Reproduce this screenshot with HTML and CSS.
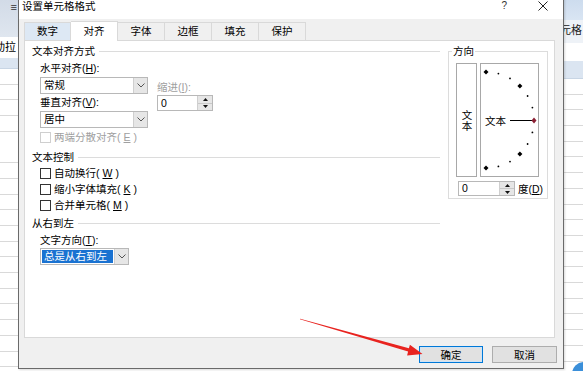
FILE: index.html
```html
<!DOCTYPE html>
<html lang="zh-CN">
<head>
<meta charset="utf-8">
<link rel="stylesheet" href="styles.css">
</head>
<body>
<div class="sheet">
  <div class="strip strip-left">
    <div class="ribbon-l"><span class="menu">≡</span></div>
    <div class="namebar-l"><span>动拉</span></div>
    <div class="hdr-l"></div>
    <div class="grid"></div>
  </div>
  <div class="strip strip-mid"></div>
  <div class="strip strip-right">
    <div class="ribbon-r1"></div>
    <div class="ribbon-r2"><span>单元格</span></div>
    <div class="white-r"></div>
    <div class="hdr-r"></div>
    <div class="grid"></div>
  </div>
</div>

<div class="dialog">
  <div class="titlebar">
    <span class="title">设置单元格格式</span>
    <span class="tb-btns">
      <span class="help">?</span>
      <svg class="close" width="10" height="10" viewBox="0 0 10 10"><path d="M0.5 0.5L9.5 9.5M9.5 0.5L0.5 9.5" stroke="#222" stroke-width="1" fill="none"/></svg>
    </span>
  </div>
  <div class="body">
    <div class="tabs">
      <div class="tab hover">数字</div>
      <div class="tab active">对齐</div>
      <div class="tab">字体</div>
      <div class="tab">边框</div>
      <div class="tab">填充</div>
      <div class="tab">保护</div>
    </div>
    <div class="panel">
      <div class="leftcol">
        <div class="grp-h">文本对齐方式</div>
        <div class="align-row">
          <div class="col-a">
            <div class="lbl">水平对齐(<u>H</u>):</div>
            <div class="select sel-wide"><span class="val">常规</span><span class="dd"><svg width="8" height="5" viewBox="0 0 8 5"><path d="M0.5 0.5L4 4L7.5 0.5" stroke="#555" fill="none"/></svg></span></div>
            <div class="lbl lbl-v">垂直对齐(<u>V</u>):</div>
            <div class="select sel-wide"><span class="val">居中</span><span class="dd"><svg width="8" height="5" viewBox="0 0 8 5"><path d="M0.5 0.5L4 4L7.5 0.5" stroke="#555" fill="none"/></svg></span></div>
          </div>
          <div class="col-b">
            <div class="lbl dis">缩进(<u>I</u>):</div>
            <div class="spin spin-indent">
              <span class="val">0</span>
              <span class="sb">
                <span class="sb-up"><svg width="5" height="3" viewBox="0 0 5 3"><path d="M0 3L2.5 0L5 3Z" fill="#111"/></svg></span>
                <span class="sb-dn"><svg width="5" height="3" viewBox="0 0 5 3"><path d="M0 0L2.5 3L5 0Z" fill="#111"/></svg></span>
              </span>
            </div>
          </div>
        </div>
        <div class="chk dis chk-first"><span class="box"></span>两端分散对齐(<u>E</u>)</div>

        <div class="grp-h grp-2">文本控制</div>
        <div class="chk chk-a"><span class="box"></span>自动换行(<u>W</u>)</div>
        <div class="chk"><span class="box"></span>缩小字体填充(<u>K</u>)</div>
        <div class="chk"><span class="box"></span>合并单元格(<u>M</u>)</div>

        <div class="grp-h grp-3">从右到左</div>
        <div class="lbl lbl-dir">文字方向(<u>T</u>):</div>
        <div class="select sel-dir"><span class="val hl">总是从右到左</span><span class="dd"><svg width="8" height="5" viewBox="0 0 8 5"><path d="M0.5 0.5L4 4L7.5 0.5" stroke="#555" fill="none"/></svg></span></div>
      </div>

      <div class="rightcol">
        <fieldset class="orient">
          <legend>方向</legend>
          <div class="orient-boxes">
            <div class="vbox"><span class="vtext">文本</span></div>
            <div class="dial">
              <svg width="57" height="112" viewBox="0 0 57 112">
                <g fill="#000">
                  <path d="M5 5.5L7.5 8L5 10.5L2.5 8Z"/>
                  <path d="M38.9 19.6L41.4 22.1L38.9 24.6L36.4 22.1Z"/>
                  <path d="M38.9 87.4L41.4 89.9L38.9 92.4L36.4 89.9Z"/>
                  <path d="M5 101.5L7.5 104L5 106.5L2.5 104Z"/>
                  <circle cx="17.4" cy="9.6" r="0.9"/>
                  <circle cx="29" cy="14.4" r="0.9"/>
                  <circle cx="46.6" cy="32" r="0.9"/>
                  <circle cx="51.4" cy="43.6" r="0.9"/>
                  <circle cx="51.4" cy="68.4" r="0.9"/>
                  <circle cx="46.6" cy="80" r="0.9"/>
                  <circle cx="29" cy="97.6" r="0.9"/>
                  <circle cx="17.4" cy="102.4" r="0.9"/>
                </g>
                <line x1="29" y1="56.5" x2="51" y2="56.5" stroke="#000" stroke-width="1"/>
                <path d="M53 53.5L55.5 56.5L53 59.5L50.5 56.5Z" fill="#8a1f33"/>
                <text x="4" y="60.5" class="dial-text">文本</text>
              </svg>
            </div>
          </div>
          <div class="deg-row">
            <div class="spin spin-deg">
              <span class="val">0</span>
              <span class="sb">
                <span class="sb-up"><svg width="5" height="3" viewBox="0 0 5 3"><path d="M0 3L2.5 0L5 3Z" fill="#111"/></svg></span>
                <span class="sb-dn"><svg width="5" height="3" viewBox="0 0 5 3"><path d="M0 0L2.5 3L5 0Z" fill="#111"/></svg></span>
              </span>
            </div>
            <span class="deg-lbl">度(<u>D</u>)</span>
          </div>
        </fieldset>
      </div>
    </div>
    <div class="buttons">
      <button class="btn ok">确定</button>
      <button class="btn">取消</button>
    </div>
  </div>
</div>

<svg class="arrow" width="583" height="371" viewBox="0 0 583 371">
  <polygon points="300.1,318.7 408.9,348.2 409.9,344.8 422.5,354 407.1,355.4 408.1,351.5 299.9,319.3" fill="#e8231f"/>
</svg>
<div class="corner-badge"></div>
</body>
</html>
```

FILE: styles.css
```css
* { box-sizing: border-box; margin: 0; padding: 0; }
html, body { width: 583px; height: 371px; overflow: hidden; }
body {
  position: relative;
  font-family: "Liberation Sans", "Noto Sans CJK SC", sans-serif;
  font-size: 10.5px;
  line-height: 14px;
  color: #000;
  background: #fff;
}
u { text-decoration: underline; text-underline-offset: 1px; }

/* background spreadsheet */
.sheet { display: flex; height: 371px; }
.strip { display: flex; flex-direction: column; }
.strip-left { width: 18px; }
.strip-mid { flex: 1; }
.strip-right { width: 20px; }
.ribbon-l { height: 37px; background: linear-gradient(#d2dbe7, #dfe6ef); display: flex; justify-content: flex-end; }
.menu { font-size: 11px; line-height: 14px; color: #333; padding-right: 1px; }
.namebar-l { height: 21px; background: #fff; white-space: nowrap; font-size: 11px; line-height: 20px; }
.namebar-l span { display: inline-block; margin-left: -6px; }
.hdr-l { height: 11px; background: #dbe5f1; border-bottom: 1px solid #c8d5e4; }
.grid { flex: 1; background: repeating-linear-gradient(#fff 0 14.7px, #d9d9d9 14.7px 15.7px); }
.ribbon-r1 { height: 20px; background: linear-gradient(#cddcee, #d9e5f3); }
.ribbon-r2 { height: 23px; background: #eef2f7; white-space: nowrap; font-size: 11px; line-height: 20px; color: #222; }
.ribbon-r2 span { display: inline-block; margin-left: -14px; }
.white-r { height: 18px; background: #fff; }
.hdr-r { height: 18px; background: #dbe5f1; border-bottom: 1px solid #c8d5e4; }

/* dialog window */
.dialog {
  position: absolute;
  left: 18px;
  top: -8px;
  width: 546px;
  height: 377px;
  border: 1px solid #6a6a6a;
  background: #f0f0f0;
  display: flex;
  flex-direction: column;
  box-shadow: 1px 1px 2px rgba(0,0,0,0.15);
  z-index: 2;
}
.titlebar {
  height: 27px;
  background: #fff;
  display: flex;
  align-items: center;
  justify-content: space-between;
  padding: 0 15px 0 3px;
}
.title { font-size: 10.5px; line-height: 10px; color: #000; }
.tb-btns { display: flex; align-items: center; gap: 31px; }
.help { font-size: 10px; color: #333; line-height: 10px; }
.close { display: block; }

.body { flex: 1; display: flex; flex-direction: column; padding: 2px 6px 5px 5px; }

.tabs { display: flex; align-items: flex-end; height: 19px; }
.tab {
  width: 47px;
  height: 18px;
  border: 1px solid #d9d9d9;
  border-bottom: none;
  border-left: none;
  text-align: center;
  line-height: 17px;
  background: #f0f0f0;
}
.tab:first-child { border-left: 1px solid #d9d9d9; }
.tab.hover { background: #dde8f4; }
.tab.active {
  height: 20px;
  margin-bottom: -1px;
  background: #fff;
  position: relative;
  z-index: 1;
  line-height: 19px;
}

.panel {
  height: 298px;
  margin-right: 2px;
  background: #fff;
  border: 1px solid #d9d9d9;
  display: flex;
  gap: 8px;
  padding: 3px 0 0 7px;
}
.leftcol { width: 408px; display: flex; flex-direction: column; }
.rightcol { width: 100px; }

.grp-h { display: flex; align-items: center; gap: 4px; height: 14px; }
.grp-h::after { content: ""; flex: 1; height: 1px; background: #dcdcdc; }
.grp-2 { margin-top: 6px; }
.grp-3 { margin-top: 4px; }

.lbl { height: 14px; white-space: nowrap; }
.dis { color: #a0a0a0; }

.align-row { display: flex; margin-top: 3px; padding-left: 8px; }
.col-a { width: 108px; display: flex; flex-direction: column; }
.col-b { margin-left: 9px; display: flex; flex-direction: column; }
.col-b .lbl { margin-top: 19px; }
.lbl-v { margin-top: 1px; }

.select {
  height: 17px;
  border: 1px solid #b8b8b8;
  background: #fff;
  display: flex;
  margin-top: 2px;
}
.sel-wide { width: 108px; }
.select .val { flex: 1; padding-left: 3px; line-height: 15px; }
.select .dd {
  width: 14px;
  background: #e6e6e6;
  border-left: 1px solid #cfcfcf;
  display: flex;
  align-items: center;
  justify-content: center;
}
.sel-dir { width: 89px; margin-left: 8px; margin-top: 1px; }
.sel-dir .val.hl {
  margin: 1px;
  padding-left: 2px;
  background: #1a72d1;
  color: #fff;
  line-height: 13px;
  font-size: 10.5px;
}

.spin {
  height: 16px;
  border: 1px solid #b8b8b8;
  background: #fff;
  display: flex;
}
.spin .val { flex: 1; padding-left: 3px; line-height: 14px; }
.spin .sb {
  width: 15px;
  display: flex;
  flex-direction: column;
  background: #e6e6e6;
  border-left: 1px solid #cfcfcf;
}
.sb-up, .sb-dn { flex: 1; display: flex; align-items: center; justify-content: center; }
.sb-up { border-bottom: 1px solid #c8c8c8; }
.spin-indent { width: 56px; margin-top: 1px; }

.chk { display: flex; align-items: center; gap: 3px; height: 14px; margin-top: 2px; padding-left: 8px; white-space: nowrap; }
.chk .box { width: 11px; height: 11px; border: 1px solid #333; background: #fff; }
.chk.dis .box { border-color: #cfcfcf; }
.chk-first { margin-top: 2px; }
.lbl-dir { margin-top: 3px; padding-left: 8px; }

/* orientation */
.orient {
  width: 100px;
  height: 155px;
  border: 1px solid #dcdcdc;
  padding: 0 0 0 7px;
}
.orient legend { padding: 0 1px; margin-left: -4px; line-height: 14px; }
.orient-boxes { display: flex; gap: 3px; margin-top: 5px; }
.vbox {
  width: 21px;
  height: 114px;
  border: 1px solid #a8a8a8;
  display: flex;
  align-items: center;
  justify-content: center;
}
.vtext { writing-mode: vertical-rl; line-height: 12px; letter-spacing: 0; }
.dial { width: 59px; height: 114px; border: 1px solid #a8a8a8; }
.dial svg { display: block; }
.dial-text { font-family: "Noto Sans CJK SC", sans-serif; font-size: 10.5px; fill: #000; }
.deg-row { display: flex; align-items: center; gap: 3px; margin-top: 4px; margin-left: 2px; }
.spin-deg { width: 57px; height: 15px; }
.spin-deg .val { line-height: 13px; }
.deg-lbl { white-space: nowrap; }

/* buttons */
.buttons { display: flex; justify-content: flex-end; gap: 9px; margin-top: 8px; }
.btn {
  height: 17px;
  font: inherit;
  font-size: 10.5px;
  line-height: 14px;
  background: #e1e1e1;
  border: 1px solid #adadad;
  color: #000;
}
.btn.ok { width: 64px; border: 1px solid #0078d7; box-shadow: inset 0 0 0 1px #cfe3f5; }
.btn:last-child { width: 65px; }

.arrow { position: absolute; left: 0; top: 0; pointer-events: none; z-index: 3; }
.corner-badge {
  position: absolute;
  left: 572px;
  top: 362px;
  width: 24px;
  height: 24px;
  border-radius: 50%;
  background: #3b8fd9;
  z-index: 1;
}
```
